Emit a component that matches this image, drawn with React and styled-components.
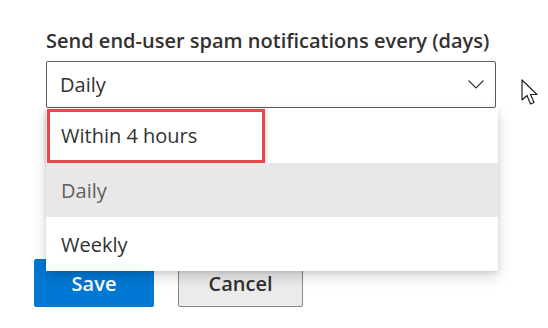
import styled, { createGlobalStyle } from "styled-components";

const GlobalStyle = createGlobalStyle`
  html, body {
    margin: 0;
    padding: 0;
    background: #fff;
  }
  body {
    font-family: "Open Sans", "Noto Sans", sans-serif;
    color: #323130;
  }
`;

const Page = styled.div`
  width: 548px;
  height: 328px;
  box-sizing: border-box;
  padding: 26px 0 0 34px;
  overflow: hidden;
`;

const Field = styled.div`
  margin-left: 12px;
  width: 450px;
`;

const Label = styled.div`
  font-size: 20px;
  font-weight: 600;
  line-height: 30px;
  letter-spacing: 0;
  margin-bottom: 5px;
  white-space: nowrap;
`;

const SelectWrap = styled.div`
  position: relative;
`;

const SelectBox = styled.div`
  height: 47px;
  box-sizing: border-box;
  border: 1px solid #605e5c;
  border-radius: 2px;
  display: flex;
  align-items: center;
  justify-content: space-between;
  padding: 0 11px 0 13px;
  font-size: 20px;
`;

const Menu = styled.div`
  position: absolute;
  top: 47px;
  left: 0;
  width: 452px;
  background: #fff;
  box-shadow: 0 6px 14px rgba(0, 0, 0, 0.16), 0 1px 4px rgba(0, 0, 0, 0.1);
  border-radius: 0 0 2px 2px;
  z-index: 2;
`;

const Option = styled.div`
  position: relative;
  height: ${(p) => p.$h}px;
  display: flex;
  align-items: center;
  padding-left: 15px;
  font-size: 20px;
  background: ${(p) => (p.$selected ? "#e8e8e8" : "#fff")};
  color: ${(p) => (p.$selected ? "#605e5c" : "#323130")};
`;

const Highlight = styled.div`
  position: absolute;
  left: 1px;
  top: 1px;
  width: 218px;
  height: 54px;
  box-sizing: border-box;
  border: 3px solid #e8474c;
  box-shadow: 0 2px 5px rgba(0, 0, 0, 0.25);
  pointer-events: none;
`;

const Cursor = styled.svg`
  position: absolute;
  left: 475px;
  top: 18px;
`;

const Buttons = styled.div`
  display: flex;
  gap: 24px;
  margin-top: 151px;
`;

const Button = styled.button`
  width: ${(p) => (p.$primary ? 120 : 125)}px;
  height: 48px;
  box-sizing: border-box;
  border-radius: 2px;
  font-family: "Open Sans", "Noto Sans", sans-serif;
  font-size: 20px;
  font-weight: 600;
  background: ${(p) => (p.$primary ? "#0078d4" : "#ebebeb")};
  color: ${(p) => (p.$primary ? "#fff" : "#323130")};
  border: 1px solid ${(p) => (p.$primary ? "#0078d4" : "#8a8886")};
  padding: 0;
`;

const Chevron = () => (
  <svg width="16" height="9" viewBox="0 0 16 9">
    <path d="M0.5 0.5 L8 8 L15.5 0.5" fill="none" stroke="#323130" strokeWidth="1.1" />
  </svg>
);

export default function App() {
  return (
    <Page>
      <GlobalStyle />
      <Field>
        <Label>Send end-user spam notifications every (days)</Label>
        <SelectWrap>
          <SelectBox>
            <span>Daily</span>
            <Chevron />
          </SelectBox>
          <Menu>
            <Option $h={55}>
              Within 4 hours
              <Highlight />
            </Option>
            <Option $h={54} $selected>Daily</Option>
            <Option $h={54}>Weekly</Option>
          </Menu>
          <Cursor width="20" height="28" viewBox="0 0 20 28">
            <path
              d="M1 1 L1 21 L6 16.5 L9.5 25 L13 23.5 L9.5 15.5 L16 15.5 Z"
              fill="#fff"
              stroke="#222"
              strokeWidth="1.2"
              strokeLinejoin="round"
            />
          </Cursor>
        </SelectWrap>
      </Field>
      <Buttons>
        <Button $primary>Save</Button>
        <Button>Cancel</Button>
      </Buttons>
    </Page>
  );
}
